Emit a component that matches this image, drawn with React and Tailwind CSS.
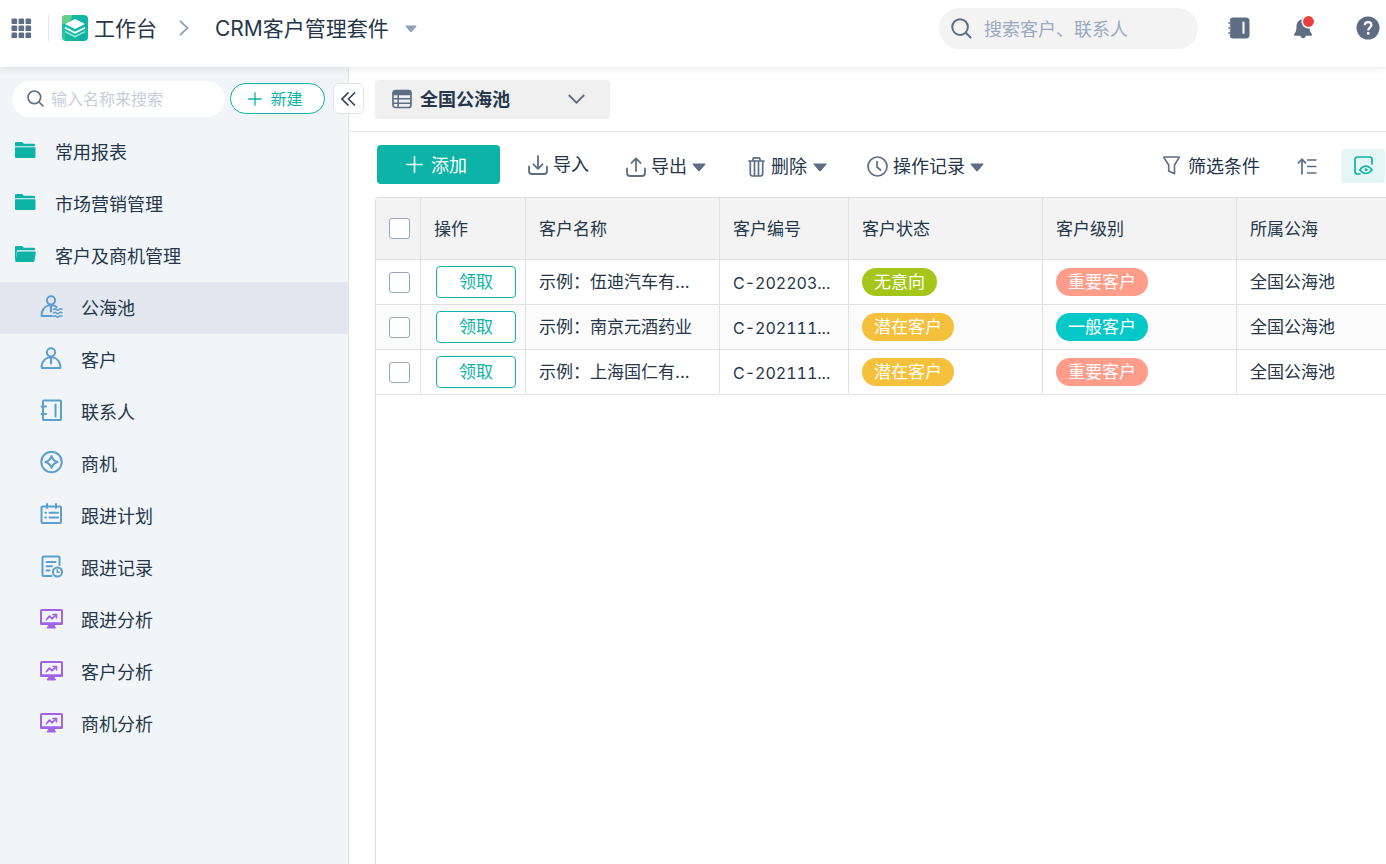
const INK = "text-[#25364a]";

function GridIcon() {
  return (
    <svg className="size-[21px] shrink-0" viewBox="0 0 21 21" fill="#5e6d84">
      {[0, 7, 14].map((y) =>
        [0, 7, 14].map((x) => <rect key={`${x}-${y}`} x={x + 0.5} y={y + 0.5} width="5.6" height="5.6" rx="1.2" />)
      )}
    </svg>
  );
}

function Logo() {
  return (
    <svg className="size-[26px] shrink-0" viewBox="0 0 26 26">
      <defs>
        <linearGradient id="logo-base" x1="0" y1="1" x2="1" y2="0">
          <stop offset="0" stopColor="#2fd0a0" />
          <stop offset="0.5" stopColor="#10b7a8" />
          <stop offset="1" stopColor="#12b5a5" />
        </linearGradient>
        <clipPath id="logo-clip">
          <rect width="26" height="26" rx="4" />
        </clipPath>
      </defs>
      <g clipPath="url(#logo-clip)">
        <rect width="26" height="26" fill="url(#logo-base)" />
        <path d="M0 0h10c0 6-4 9-10 9z" fill="#63d08a" />
        <path d="M3 17.5l10 6 10-6V26H3z" fill="#0c9e9a" opacity="0.4" />
        <path d="M13 4l10 5-10 5L3 9z" fill="#fff" />
        <path d="M3 12.8l10 5 10-5" fill="none" stroke="#fff" strokeWidth="1.8" />
        <path d="M3 16.6l10 5 10-5" fill="none" stroke="#9ae6da" strokeWidth="1.6" />
      </g>
    </svg>
  );
}

function SearchIcon({ className }) {
  return (
    <svg className={className} viewBox="0 0 22 22" fill="none" stroke="#5e6d84" strokeWidth="2.1" strokeLinecap="round">
      <circle cx="9.5" cy="9.5" r="8.2" />
      <path d="M15.5 15.5l5 5" />
    </svg>
  );
}

function Caret({ className }) {
  return (
    <svg className={className} viewBox="0 0 14 8" fill="currentColor">
      <path d="M1.200 0h11.600q1.400 0 .5 1L8 7.200q-1 1-2 0L.7 1Q-.2 0 1.200 0z" />
    </svg>
  );
}

function Plus({ className }) {
  return (
    <svg className={className} viewBox="0 0 16 16" fill="none" stroke="currentColor" strokeWidth="1.500" strokeLinecap="round">
      <path d="M8 .8v14.400M.8 8h14.400" />
    </svg>
  );
}

function NotebookSolid() {
  return (
    <svg className="h-6 w-[22px]" viewBox="0 0 22 24">
      <rect x="1.800" y="1.500" width="19.700" height="21" rx="3.500" fill="#5e6d84" />
      <path d="M.3 7h3.500M.3 12h3.500M.3 17h3.500" stroke="#fff" strokeWidth="3.2" />
      <path d="M.3 7h4M.3 12h4M.3 17h4" stroke="#5e6d84" strokeWidth="1.500" />
      <rect x="2.600" y="4" width="3" height="16" fill="#5e6d84" />
      <path d="M15.500 6.500v10.500" stroke="#fff" strokeWidth="2" strokeLinecap="round" />
    </svg>
  );
}

function Bell() {
  return (
    <svg className="h-6 w-[22px]" viewBox="0 0 22 24">
      <path
        d="M9 3.200v-1.200q1-1 2 0v1c4 .8 5.500 4 5.500 7.500 0 4 .7 5.500 2.300 7.500v1.700h-6c-.5 3.300-5 3.300-5.500 0H1.200V18c1.600-2 2.300-3.500 2.300-7.500 0-3.700 1.800-6.500 5.500-7.300z"
        fill="#5e6d84"
      />
      <circle cx="15.500" cy="5.500" r="7" fill="#fff" />
      <circle cx="15.500" cy="5.500" r="5.400" fill="#e5403d" />
    </svg>
  );
}

function Help() {
  return (
    <svg className="size-6" viewBox="0 0 24 24">
      <circle cx="12" cy="12" r="11.500" fill="#5e6d84" />
      <path d="M8.700 9.300c.1-2 1.500-3.200 3.400-3.200s3.300 1.200 3.300 2.900c0 2.600-3.200 2.600-3.200 5.400" fill="none" stroke="#fff" strokeWidth="2.200" />
      <circle cx="12.200" cy="17.400" r="1.400" fill="#fff" />
    </svg>
  );
}

function Folder({ open }) {
  return (
    <svg className="h-[18px] w-[21px] shrink-0" viewBox="0 0 21 18" fill="#0db3a6">
      <path d="M1.200 1h5.300q1 0 1.500.7l.8 1h10q1.200 0 1.200 1.200v1.300H0V2.200Q0 1 1.200 1z" />
      {open ? (
        <>
          <path d="M0 4h2.200L.6 15.500H0z" />
          <path d="M3.300 6.500H20q1 0 .8 1l-1.300 8.300q-.2 1.200-1.400 1.200H1q-.8 0-.6-.8L2 7.500q.2-1 1.300-1z" />
        </>
      ) : (
        <path d="M0 6.200h20.500v9.500q0 1.300-1.300 1.300H1.300Q0 17 0 15.700z" />
      )}
    </svg>
  );
}

function Person({ waves }) {
  return (
    <>
      <circle cx="11" cy="5.300" r="4.100" />
      {waves ? (
        <path d="M12 21H1.700c-.5-4.200 1.800-9 6.300-10.400q3-1 6 0 1.600.6 2.700 1.600" />
      ) : (
        <path d="M8 10.600c-4.500 1.400-6.800 6.200-6.300 10.400h18.600c.5-4.200-1.800-9-6.300-10.400q-3-1-6 0z" />
      )}
      <path d="M11 11v5.500" strokeWidth="2.200" />
      {waves && <path d="M13.500 14.500q1.400-1.300 2.800 0t2.800 0 2.800-.3M13.500 18q1.400-1.300 2.800 0t2.800 0 2.800-.3M13.500 21.500q1.400-1.300 2.800 0t2.800 0 2.800-.3" strokeWidth="1.500" />}
    </>
  );
}

function Monitor() {
  return (
    <>
      <rect x="1" y="3" width="21" height="14" rx="1" />
      <path d="M1 16.500h21" strokeWidth="2.500" />
      <path d="M9 18h5l1.500 3h-8z" fill="currentColor" strokeWidth="1" />
      <path d="M6.500 12.500l3-3.300 2.500 2.500L16 8" strokeWidth="1.800" />
      <path d="M13 7.500h3.500V11" strokeWidth="1.600" />
    </>
  );
}

const glyphs = {
  pool: <Person waves />,
  person: <Person />,
  contacts: (
    <>
      <rect x="3" y="1.500" width="18" height="19.500" rx="1" />
      <path d="M1.500 7.500h4.500M1.500 15h4.500M15.500 5.500v12" />
    </>
  ),
  compass: (
    <>
      <circle cx="11.500" cy="11" r="10.200" />
      <path d="M11.500 5q1.400 4.600 6 6-4.600 1.400-6 6Q10.100 12.400 5.500 11q4.600-1.400 6-6z" />
    </>
  ),
  plan: (
    <>
      <rect x="1.500" y="3.500" width="19.500" height="16.500" rx="1" />
      <path d="M7 1v4M16 1v4M5.300 9.800h.7M9.500 9.800h8.500M5.300 14.600h.7M9.500 14.600h8.500" />
    </>
  ),
  record: (
    <>
      <path d="M11.500 21H3.500q-1 0-1-1V2.500q0-1 1-1h15q1 0 1 1V10" />
      <path d="M6.500 7h9M6.500 11.300h5.500M6.500 15.500h3" />
      <circle cx="17.500" cy="17" r="4.600" />
      <path d="M17.200 14.800V17.200h2" strokeWidth="1.500" />
    </>
  ),
  monitor: <Monitor />,
};

const folders = [
  { name: "常用报表" },
  { name: "市场营销管理" },
  {
    name: "客户及商机管理",
    items: [
      { name: "公海池", icon: "pool", active: true },
      { name: "客户", icon: "person" },
      { name: "联系人", icon: "contacts" },
      { name: "商机", icon: "compass" },
      { name: "跟进计划", icon: "plan" },
      { name: "跟进记录", icon: "record" },
      { name: "跟进分析", icon: "monitor", purple: true },
      { name: "客户分析", icon: "monitor", purple: true },
      { name: "商机分析", icon: "monitor", purple: true },
    ],
  },
];

const rows = [
  { name: "示例：伍迪汽车有...", code: "C-202203...", status: "无意向", statusBg: "bg-[#a4c61a]", level: "重要客户", levelBg: "bg-[#ff9d8a]" },
  { name: "示例：南京元酒药业", code: "C-202111...", status: "潜在客户", statusBg: "bg-[#f5c03c]", level: "一般客户", levelBg: "bg-[#04c8c8]" },
  { name: "示例：上海国仁有...", code: "C-202111...", status: "潜在客户", statusBg: "bg-[#f5c03c]", level: "重要客户", levelBg: "bg-[#ff9d8a]" },
];

function Header() {
  return (
    <header className="relative z-10 flex h-[67px] shrink-0 items-start bg-white shadow-[0_1px_8px_rgba(0,0,0,0.10)]">
      <div className="flex h-14 items-center pl-[11px]">
        <button aria-label="应用列表"><GridIcon /></button>
        <span className="ml-4 h-[26px] w-px bg-[#e3e5e8]" />
        <a href="#home" className="ml-[13px] flex items-center gap-[6px] text-[21px]">
          <Logo />
          <span className="pt-[2px]">工作台</span>
        </a>
        <svg className="ml-[22px] h-4 w-[10px]" viewBox="0 0 10 16" fill="none" stroke="#91a1b7" strokeWidth="1.800">
          <path d="M1 .8L8.500 8 1 15.200" />
        </svg>
        <button className="ml-[26px] flex items-center gap-4 text-[21px] whitespace-nowrap">
          <span className="pt-[2px]">CRM客户管理套件</span>
          <Caret className="mt-[2px] h-2 w-3 text-[#91a1b7]" />
        </button>
      </div>
      <div className="ml-auto flex h-14 items-center">
        <label className="flex h-[41px] w-[259px] items-center gap-3 rounded-full bg-[#f3f3f3] pl-3">
          <SearchIcon className="size-[21px] shrink-0" />
          <input aria-label="搜索" placeholder="搜索客户、联系人" className="w-full min-w-0 bg-transparent pt-[2px] pr-4 text-[18px] outline-none placeholder:text-[#9aa9bf]" />
        </label>
        <button aria-label="通讯录" className="ml-[30px]"><NotebookSolid /></button>
        <button aria-label="通知" className="ml-[43px]"><Bell /></button>
        <button aria-label="帮助" className="mr-[6px] ml-[41px]"><Help /></button>
      </div>
    </header>
  );
}

function NavItem({ item }) {
  return (
    <a href="#item" className={`flex h-[52px] items-center gap-[18px] pl-10 ${item.active ? "bg-[#e3e7ef]" : ""}`}>
      <svg
        className={`mb-1 size-[23px] shrink-0 ${item.purple ? "text-[#a263e6]" : "text-[#5b9fd0]"}`}
        viewBox="0 0 23 23"
        fill="none"
        stroke="currentColor"
        strokeWidth="2"
        strokeLinecap="round"
        strokeLinejoin="round"
      >
        {glyphs[item.icon]}
      </svg>
      {item.name}
    </a>
  );
}

function Sidebar() {
  return (
    <aside className="relative w-[349px] shrink-0 border-r border-[#e1e4e7] bg-[#f2f5f8]">
      <div className="flex h-[59px] items-center gap-[5px] pt-1 pl-3">
        <label className="flex h-9 w-[213px] items-center gap-[7px] rounded-full bg-white pl-[15px]">
          <SearchIcon className="size-[17px] shrink-0" />
          <input aria-label="搜索名称" placeholder="输入名称来搜索" className="w-full min-w-0 bg-transparent pr-3 text-[16px] outline-none placeholder:text-[#c6cedb]" />
        </label>
        <button className="flex h-[31px] w-[95px] items-center justify-center gap-2 rounded-full border border-[#0db3a6] bg-white pr-1 text-[16px] text-[#0db3a6]">
          <Plus className="size-[14px]" />
          新建
        </button>
      </div>
      <nav className="text-[18px]">
        {folders.map((f) => (
          <div key={f.name}>
            <button className="flex h-[52px] w-full items-center gap-[19px] pl-[15px]">
              <span className="mb-1"><Folder open={!!f.items} /></span>
              {f.name}
            </button>
            {f.items?.map((i) => <NavItem key={i.name} item={i} />)}
          </div>
        ))}
      </nav>
      <button aria-label="收起侧栏" className="absolute top-4 -right-4 flex h-[31px] w-[31px] items-center justify-center rounded-md border border-[#e3e5e8] bg-white">
        <svg className="h-[14px] w-[15px]" viewBox="0 0 15 14" fill="none" stroke="#33445a" strokeWidth="1.600">
          <path d="M7.500 .5L1 7l6.500 6.500M14 .5L7.500 7l6.500 6.500" />
        </svg>
      </button>
    </aside>
  );
}

function Tray({ up }) {
  return (
    <svg className="size-5 shrink-0" viewBox="0 0 20 20" fill="none" stroke="#5e6d84" strokeWidth="1.800" strokeLinecap="round" strokeLinejoin="round">
      <path d="M1 11.500V16q0 3 3 3h12q3 0 3-3v-4.500" />
      <path d={up ? "M10 14V1.500M5.500 5.800L10 1.300l4.500 4.500" : "M10 1v12.500M5.500 9.300l4.500 4.500 4.500-4.500"} />
    </svg>
  );
}

function Toolbar() {
  return (
    <div className="flex h-[65px] items-center pt-1 pl-7 text-[18px] whitespace-nowrap">
      <button className="mb-1 flex h-[39px] w-[123px] items-center justify-center gap-2 rounded bg-[#0db3a6] pr-1 text-white">
        <Plus className="size-[17px]" />
        <span className="pt-[2px]">添加</span>
      </button>
      <button className="mb-1 ml-7 flex items-center gap-[5px]"><Tray />导入</button>
      <button className="ml-[37px] flex items-center gap-[5px]"><Tray up />导出<Caret className="mt-[2px] h-[9px] w-[14px] text-[#5e6d84]" /></button>
      <button className="ml-[42px] flex items-center gap-[6px]">
        <svg className="h-5 w-[17px]" viewBox="0 0 17 20" fill="none" stroke="#5e6d84" strokeWidth="1.700" strokeLinecap="round" strokeLinejoin="round">
          <path d="M.8 4h15.400M5 3.800V2q0-1.200 1.200-1.200h4.600Q12 .8 12 2v1.800M2.300 4.200v12.600q0 2.200 2.200 2.200h8q2.200 0 2.200-2.200V4.200M6.500 4.500V19M10.500 4.500V19" />
        </svg>
        删除
        <Caret className="mt-[2px] h-[9px] w-[14px] text-[#5e6d84]" />
      </button>
      <button className="ml-10 flex items-center gap-[5px]">
        <svg className="size-[21px]" viewBox="0 0 21 21" fill="none" stroke="#5e6d84" strokeWidth="1.700" strokeLinecap="round">
          <circle cx="10.500" cy="10.500" r="9.500" />
          <path d="M10 5.500v5.500l3.500 3" />
        </svg>
        操作记录
        <Caret className="mt-[2px] h-[9px] w-[14px] text-[#5e6d84]" />
      </button>
      <div className="ml-auto flex items-center">
        <button className="flex items-center gap-2">
          <svg className="mb-[2px] h-[19px] w-[17px]" viewBox="0 0 17 19" fill="none" stroke="#5e6d84" strokeWidth="1.600" strokeLinejoin="round">
            <path d="M1.200 1h14.600q.6 0 .3.600L11.500 9v8.700L5.700 15V9L.9 1.600Q.6 1 1.200 1z" />
          </svg>
          筛选条件
        </button>
        <button aria-label="排序" className="ml-[37px]">
          <svg className="h-[17px] w-5" viewBox="0 0 20 17" fill="none" stroke="#5e6d84" strokeWidth="1.700">
            <path d="M5 16.500V1.500M.8 5.500L5 1.300l4 4M10 2H19.500M10 8.500H19.500M10 15H19.500" />
          </svg>
        </button>
        <button aria-label="视图设置" className="mr-px mb-[2px] ml-6 flex h-[34px] w-[44px] items-center justify-center rounded-sm bg-[#e5f6f5]">
          <svg className="h-[19px] w-[19px]" viewBox="0 0 19 19" fill="none" stroke="#0db3a6" strokeWidth="1.700" strokeLinecap="round">
            <path d="M6 18H3.500Q1 18 1 15.500V3.500Q1 1 3.500 1h12Q18 1 18 3.500V8" />
            <path d="M5.800 13.800q5.800-7.600 12.400 0-6.600 7.300-12.400 0z" strokeWidth="1.500" />
            <circle cx="12" cy="13.700" r="1" fill="#0db3a6" strokeWidth="1" />
          </svg>
        </button>
      </div>
    </div>
  );
}

function Check({ label }) {
  return <input type="checkbox" aria-label={label} className="block size-[21px] appearance-none rounded-[3px] border border-[#97a6bd] bg-white" />;
}

function Pill({ bg, children }) {
  return <span className={`flex h-7 w-fit items-center rounded-full px-3 pt-[2px] text-white ${bg}`}>{children}</span>;
}

const LINES = "border-r border-b border-[#e0e1e3] last:border-r-0";
const CELL = `${LINES} px-[13px] text-left font-normal whitespace-nowrap`;
const TEXT_CELL = `${CELL} pt-[2px]`;

function CustomerTable() {
  return (
    <div className="ml-[26px] flex-1 rounded-tl border-t border-l border-[#dcdee1]">
      <table className="w-full table-fixed border-separate border-spacing-0 text-[17px]">
        <colgroup>
          <col className="w-[45px]" />
          <col className="w-[105px]" />
          <col className="w-[194px]" />
          <col className="w-[129px]" />
          <col className="w-[194px]" />
          <col className="w-[194px]" />
          <col />
        </colgroup>
        <thead className="bg-[#f3f3f3]">
          <tr className="h-[62px]">
            <th className={`rounded-tl ${CELL}`}><Check label="全选" /></th>
            {["操作", "客户名称", "客户编号", "客户状态", "客户级别", "所属公海"].map((h) => (
              <th key={h} className={TEXT_CELL}>{h}</th>
            ))}
          </tr>
        </thead>
        <tbody>
          {rows.map((r) => (
            <tr key={r.name} className="h-[45px] even:bg-[#fbfbfb]">
              <td className={CELL}><Check label={r.name} /></td>
              <td className={`${LINES} pl-[15px]`}>
                <button className="block h-8 w-20 rounded border border-[#0db3a6] bg-white pt-[2px] text-[#0db3a6]">领取</button>
              </td>
              <td className={TEXT_CELL}>{r.name}</td>
              <td className={`${TEXT_CELL} text-[16px] tabular-nums`}>{r.code}</td>
              <td className={CELL}><Pill bg={r.statusBg}>{r.status}</Pill></td>
              <td className={CELL}><Pill bg={r.levelBg}>{r.level}</Pill></td>
              <td className={TEXT_CELL}>全国公海池</td>
            </tr>
          ))}
        </tbody>
      </table>
    </div>
  );
}

export default function App() {
  return (
    <div className={`flex min-h-screen flex-col overflow-hidden bg-white font-[Inter,'Noto_Sans_CJK_SC',sans-serif] ${INK}`}>
      <Header />
      <div className="flex flex-1">
        <Sidebar />
        <main className="flex min-w-0 flex-1 flex-col">
          <div className="flex h-[65px] items-center border-b border-[#e5e6e8] pl-[26px]">
            <button className="flex h-[39px] w-[235px] items-center rounded bg-[#f0f0f0] pr-[25px] pl-[17px] text-[18px] font-bold">
              <svg className="mr-2 size-5" viewBox="0 0 20 20" fill="none" stroke="#5e6d84" strokeWidth="1.700">
                <rect x="1" y="1.500" width="18" height="17" rx="2.500" />
                <path d="M1.500 4h17" strokeWidth="4.500" />
                <path d="M1 9.800h18M1 14.200h18M6.200 5v13" strokeWidth="1.500" />
              </svg>
              全国公海池
              <svg className="ml-auto h-[10px] w-[17px]" viewBox="0 0 17 10" fill="none" stroke="#5e6d84" strokeWidth="1.800">
                <path d="M.8 1l7.700 7.700L16.200 1" />
              </svg>
            </button>
          </div>
          <Toolbar />
          <CustomerTable />
        </main>
      </div>
    </div>
  );
}
